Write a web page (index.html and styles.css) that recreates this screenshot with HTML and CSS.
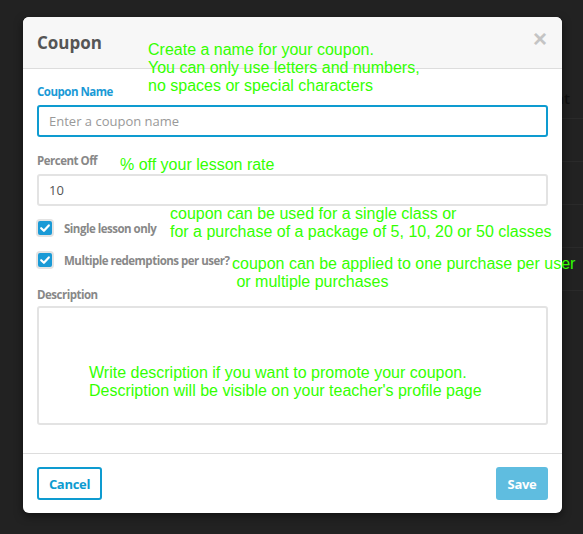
FILE: index.html
```html
<!DOCTYPE html>
<html lang="en">
<head>
  <meta charset="UTF-8" />
  <title>Coupon</title>
  <link rel="stylesheet" href="styles.css">
</head>
<body>

  <!-- page behind the dialog -->
  <div class="backdrop">
    <div class="bg-row bg-head">Percent</div>
    <div class="bg-row"></div>
    <div class="bg-row"></div>
    <div class="bg-row"></div>
    <div class="bg-row"></div>
  </div>

  <!-- coupon dialog -->
  <div class="modal">
    <div class="modal-header">
      <h3>Coupon</h3>
      <span class="close">&times;</span>
    </div>

    <div class="modal-body">
      <label class="field-label active">Coupon Name</label>
      <input type="text" class="field focus" placeholder="Enter a coupon name" />

      <label class="field-label">Percent Off</label>
      <input type="text" class="field" value="10" />

      <div class="check-row">
        <span class="check">
          <svg viewBox="0 0 14 14" width="14" height="14"><path d="M3.2 7.2 L5.9 9.8 L10.8 4.4" fill="none" stroke="#fff" stroke-width="2.2" stroke-linecap="round" stroke-linejoin="round"/></svg>
        </span>
        <span class="check-label">Single lesson only</span>
      </div>
      <div class="check-row">
        <span class="check">
          <svg viewBox="0 0 14 14" width="14" height="14"><path d="M3.2 7.2 L5.9 9.8 L10.8 4.4" fill="none" stroke="#fff" stroke-width="2.2" stroke-linecap="round" stroke-linejoin="round"/></svg>
        </span>
        <span class="check-label">Multiple redemptions per user?</span>
      </div>

      <label class="field-label desc-label">Description</label>
      <textarea class="field area"></textarea>
    </div>

    <div class="modal-footer">
      <button class="btn btn-outline">Cancel</button>
      <button class="btn btn-save">Save</button>
    </div>

    <!-- green notes drawn over the dialog -->
    <div class="note note-name">Create a name for your coupon.<br>You can only use letters and numbers,<br>no spaces or special characters</div>
    <div class="note note-percent">% off your lesson rate</div>
    <div class="note note-single">coupon can be used for a single class or<br>for a purchase of a package of 5, 10, 20 or 50 classes</div>
    <div class="note note-multi">coupon can be applied to one purchase per user<br>&nbsp;or multiple purchases</div>
    <div class="note note-desc">Write description if you want to promote your coupon.<br>Description will be visible on your teacher's profile page</div>
  </div>

</body>
</html>
```

FILE: styles.css
```css
body {
  margin: 0;
  background-color: #222;
  font-family: 'Open Sans', sans-serif;
  height: 534px;
  overflow: hidden;
}

/* page behind */
.backdrop {
  margin-left: 556px;
  padding-top: 88px;
}

.bg-row {
  height: 42px;
  border-bottom: 1px solid #2a2a2a;
  color: #111;
  font-size: 15px;
  font-weight: 600;
  padding-left: 6px;
}

.bg-head {
  height: 30px;
  margin-left: -48px;
}

/* dialog */
.modal {
  position: absolute;
  left: 23px;
  top: 17px;
  width: 539px;
  background-color: #fff;
  border-radius: 6px;
  box-shadow: 0 3px 9px rgba(0, 0, 0, 0.5);
}

.modal-header {
  background-color: #f7f7f7;
  border-bottom: 1px solid #ddd;
  border-radius: 6px 6px 0 0;
  height: 51px;
  padding: 0 14px;
  display: flex;
  justify-content: space-between;
  align-items: center;
}

.modal-header h3 {
  margin: 0;
  font-size: 17px;
  font-weight: 700;
  color: #555;
}

.close {
  color: #c4c4c4;
  font-size: 24px;
  font-weight: 700;
  margin-top: -8px;
  margin-right: 1px;
  font-family: 'Liberation Sans', sans-serif;
}

.modal-body {
  padding: 16px 14px 28px;
  display: flex;
  flex-direction: column;
}

.field-label {
  font-size: 11.5px;
  line-height: 14px;
  font-weight: 700;
  color: #888;
  letter-spacing: -0.5px;
  margin-bottom: 6px;
}

.field-label.active {
  color: #1a9ad6;
}

.field {
  box-sizing: border-box;
  width: 100%;
  height: 32px;
  border: 2px solid #e3e3e3;
  border-radius: 3px;
  padding: 0 10px;
  font-family: 'Open Sans', sans-serif;
  font-size: 13px;
  color: #555;
  margin-bottom: 17px;
  outline: none;
}

.field.focus {
  border-color: #0e9bd0;
}

.field::placeholder {
  color: #999;
}

.area {
  height: 119px;
  margin-bottom: 0;
  resize: none;
}

.check-row {
  height: 16px;
  display: flex;
  align-items: center;
  gap: 12px;
  margin: -3px 0 19px 1px;
}

.check {
  width: 14px;
  height: 14px;
  border-radius: 2px;
  background-color: #1a9ad6;
  box-shadow: 0 0 0 2px #e3e3e3;
  display: flex;
}

.check-label {
  font-size: 11.5px;
  font-weight: 700;
  color: #888;
  letter-spacing: -0.5px;
}

.desc-label {
  margin-top: 1px;
  margin-bottom: 4px;
}

.modal-footer {
  border-top: 1px solid #ddd;
  padding: 13px 14px;
  display: flex;
  justify-content: space-between;
}

.btn {
  height: 33px;
  border-radius: 3px;
  font-family: 'Open Sans', sans-serif;
  font-weight: 700;
  font-size: 13px;
  letter-spacing: -0.3px;
  cursor: pointer;
}

.btn-outline {
  width: 65px;
  background-color: #fff;
  border: 2px solid #0e9bd0;
  color: #0e9bd0;
}

.btn-save {
  width: 52px;
  background-color: #5fbde0;
  border: none;
  color: #fff;
}

/* green annotations */
.note {
  position: absolute;
  color: #33ff00;
  font-family: 'Liberation Sans', Arial, sans-serif;
  font-size: 16px;
  line-height: 18px;
  white-space: nowrap;
}

.note-name { left: 125px; top: 24px; }
.note-percent { left: 97px; top: 139px; }
.note-single { left: 147px; top: 188px; }
.note-multi { left: 209px; top: 238px; }
.note-desc { left: 66px; top: 347px; }
```
